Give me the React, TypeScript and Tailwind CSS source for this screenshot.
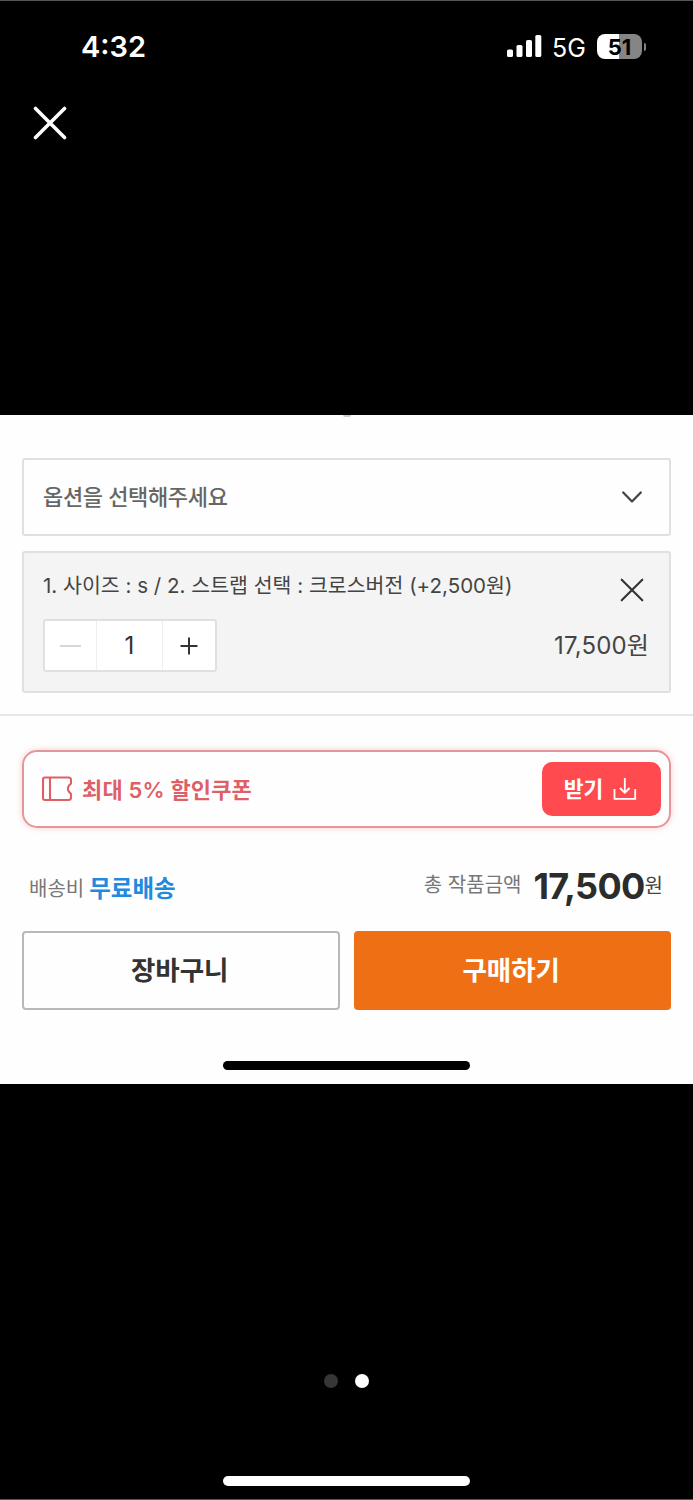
import { useState } from "react";

function StatusBar() {
  return (
    <div className="flex h-[92px] items-center justify-between pl-[81px] pr-[47px]">
      <div className="-mt-0.5 text-[29px] font-semibold leading-none">
        4:32
      </div>
      <div className="flex items-center">
        <svg
          className="-mt-0.5"
          width="36"
          height="24"
          viewBox="0 0 36 24"
          fill="currentColor"
        >
          <rect x="0" y="15.5" width="6" height="7.5" rx="1.6" />
          <rect x="9.5" y="11" width="6" height="12" rx="1.6" />
          <rect x="19" y="6" width="6" height="17" rx="1.6" />
          <rect x="28.3" y="1" width="6" height="22" rx="1.6" />
        </svg>
        <span className="ml-[9px] mt-0.5 w-[34px] text-[25px] leading-none">
          5G
        </span>
        <div className="-mt-px ml-[11px] flex h-[25px] w-[45px] items-center justify-center rounded-[8px] bg-linear-to-r from-white from-50% to-[#858585] to-50% text-[22px] font-bold leading-none text-black">
          51
        </div>
        <div className="ml-0.5 h-2 w-[2px] rounded-r bg-[#858585]" />
      </div>
    </div>
  );
}

function TicketIcon() {
  return (
    <svg
      width="32"
      height="26"
      viewBox="0 0 32 26"
      fill="none"
      stroke="currentColor"
      strokeWidth="2.1"
      strokeLinejoin="round"
    >
      <path d="M3 1.5H26.5Q29 1.5 29 4V7.5L27 9.5Q24.8 12.5 27 15.8L29 18V21.5Q29 24 26.5 24H3Q1 24 1 22V3.5Q1 1.5 3 1.5Z" />
      <path d="M8 1.5V24" />
    </svg>
  );
}

function DownloadIcon() {
  return (
    <svg
      width="24"
      height="24"
      viewBox="0 0 24 24"
      fill="none"
      stroke="currentColor"
      strokeWidth="1.8"
    >
      <path d="M1.5 12V21.8H22.2V12" />
      <path d="M11.8 1V15.5M7 11L11.8 15.8L16.6 11" />
    </svg>
  );
}

export default function App() {
  const [count, setCount] = useState(1);

  return (
    <div className="flex h-[1500px] w-[693px] flex-col overflow-hidden whitespace-nowrap border-y border-[#555] bg-black font-[Inter,'Noto_Sans_CJK_KR',sans-serif] text-white">
      <header className="h-[414px] shrink-0">
        <StatusBar />
        <button aria-label="닫기" className="ml-[33px] mt-[13px] block">
          <svg
            width="34"
            height="34"
            viewBox="0 0 34 34"
            fill="none"
            stroke="currentColor"
            strokeWidth="3.6"
            strokeLinecap="round"
          >
            <path d="M2.5 2.5L31.5 31.5M31.5 2.5L2.5 31.5" />
          </svg>
        </button>
      </header>

      <main className="flex h-[669px] shrink-0 flex-col bg-[#fefefe] text-[#333]">
        <div className="mx-auto h-[2px] w-2 rounded-b bg-[#ccc]" />

        <button className="mx-[22px] mt-[41px] flex h-[78px] items-center justify-between rounded-[3px] border-2 border-[#e0e0e0] pl-[19px] pr-[26px] text-[22px] font-medium tracking-[-0.35px] text-[#666]">
          <span>옵션을 선택해주세요</span>
          <svg
            width="22"
            height="14"
            viewBox="0 0 22 14"
            fill="none"
            stroke="#444"
            strokeWidth="2.3"
            strokeLinecap="round"
            strokeLinejoin="round"
          >
            <path d="M2.2 2.5L11 11.5L19.8 2.5" />
          </svg>
        </button>

        <section className="mx-[22px] mt-[15px] h-[142px] rounded-[3px] border-2 border-[#e0e0e0] bg-[#f4f4f4] pl-[19px] pr-5">
          <div className="flex h-[66px] items-center justify-between pr-[5px]">
            <span className="text-[20.5px] tracking-[0.02px] text-[#444]">
              1. 사이즈 : s / 2. 스트랩 선택 : 크로스버전 (+2,500원)
            </span>
            <button aria-label="옵션 삭제" className="mt-2">
              <svg
                width="24"
                height="24"
                viewBox="0 0 24 24"
                fill="none"
                stroke="#333"
                strokeWidth="2.1"
                strokeLinecap="round"
              >
                <path d="M1.7 1.7L22.3 22.3M22.3 1.7L1.7 22.3" />
              </svg>
            </button>
          </div>
          <div className="flex items-center justify-between">
            <div className="flex h-[53px] w-[174px] rounded-[3px] border-2 border-[#e0e0e0] bg-white">
              <button
                aria-label="수량 감소"
                className="flex w-[52px] items-center justify-center border-r border-[#eee]"
                onClick={() => setCount(Math.max(1, count - 1))}
              >
                <div className="h-[2px] w-[21px] bg-[#d6d6d6]" />
              </button>
              <div className="flex w-[66px] items-center justify-center border-r border-[#eee] text-[24px]">
                {count}
              </div>
              <button
                aria-label="수량 증가"
                className="flex flex-1 items-center justify-center"
                onClick={() => setCount(count + 1)}
              >
                <svg
                  width="18"
                  height="18"
                  viewBox="0 0 18 18"
                  stroke="#333"
                  strokeWidth="2"
                >
                  <path d="M0.5 9H17.5M9 0.5V17.5" />
                </svg>
              </button>
            </div>
            <span className="text-[24px] tracking-[0.15px] text-[#444]">
              17,500원
            </span>
          </div>
        </section>

        <hr className="mt-[21px] border-t-2 border-[#e6e6e6]" />

        <div className="mx-[22px] mt-[34px] flex h-[78px] items-center justify-between rounded-[15px] border-2 border-[#e2979b] pl-[18px] pr-2 shadow-[0_0_6px_rgba(255,75,80,0.28)]">
          <div className="flex items-center gap-2 text-[22px] font-semibold tracking-[0.15px] text-[#df5f66]">
            <TicketIcon />
            <span className="mt-0.5">최대 5% 할인쿠폰</span>
          </div>
          <button className="flex h-[54px] w-[119px] items-center justify-center gap-2.5 rounded-[10px] bg-[#ff4b50] pr-0.5 text-[21.5px] font-semibold text-white">
            <span>받기</span>
            <DownloadIcon />
          </button>
        </div>

        <div className="mt-[29px] flex h-[62px] items-center justify-between pl-[29px] pr-[30px] text-[#777]">
          <div className="flex items-center gap-[5px] pt-0.5">
            <span className="text-[20px]">배송비</span>
            <span className="text-[23.5px] font-bold text-[#1f8ae0]">
              무료배송
            </span>
          </div>
          <div className="flex items-center">
            <span className="-mt-1.5 text-[20px]">총 작품금액</span>
            <span className="-mt-1 ml-3 text-[36px] font-bold leading-none tracking-[-0.7px] text-[#2c2c2c]">
              17,500
            </span>
            <span className="-mt-1 text-[20px] text-[#444]">원</span>
          </div>
        </div>

        <div className="mx-[22px] mt-3 grid h-[79px] grid-cols-2 gap-3.5 text-[26.5px] font-semibold">
          <button className="rounded-[4px] border-2 border-[#b8b8b8] pr-0.5">
            장바구니
          </button>
          <button className="rounded-[4px] bg-[#ef6f15] pr-0.5 text-white">
            구매하기
          </button>
        </div>

        <div className="mx-auto mt-[51px] h-[9px] w-[247px] rounded-full bg-black" />
      </main>

      <footer className="flex flex-col items-center">
        <div className="mt-[290px] flex gap-[17px]">
          <div className="size-3.5 rounded-full bg-[#363636]" />
          <div className="size-3.5 rounded-full bg-white" />
        </div>
        <div className="mt-[88px] h-[10px] w-[247px] rounded-full bg-white" />
      </footer>
    </div>
  );
}
